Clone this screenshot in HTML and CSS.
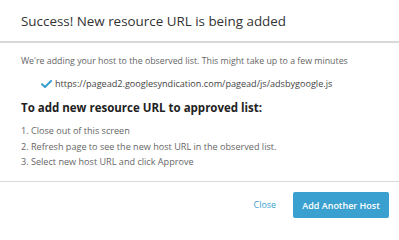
FILE: index.html
```html
<!DOCTYPE html>
<html>
<head>
<meta charset="utf-8">
<link rel="stylesheet" href="styles.css">
</head>
<body>
<div class="modal">
  <div class="modal-header">
    <h1 class="title">Success! New resource URL is being added</h1>
  </div>
  <div class="modal-body">
    <p class="intro">We're adding your host to the observed list. This might take up to a few minutes</p>
    <div class="url-row">
      <svg class="check" width="11" height="8" viewBox="0 0 11 8"><path d="M1 4.2 L4 7 L10 1" fill="none" stroke="#3a9fd0" stroke-width="2" stroke-linecap="round" stroke-linejoin="round"/></svg>
      <span class="url">https://pagead2.googlesyndication.com/pagead/js/adsbygoogle.js</span>
    </div>
    <h2 class="subtitle">To add new resource URL to approved list:</h2>
    <ol class="steps">
      <li>1. Close out of this screen</li>
      <li>2. Refresh page to see the new host URL in the observed list.</li>
      <li>3. Select new host URL and click Approve</li>
    </ol>
  </div>
  <div class="modal-footer">
    <a class="btn-link">Close</a>
    <button class="btn-primary">Add Another Host</button>
  </div>
</div>
</body>
</html>
```
FILE: styles.css
```css
* { box-sizing: border-box; }
html, body { margin: 0; padding: 0; background: #fff; }
body { font-family: "Open Sans", "Liberation Sans", sans-serif; color: #555; }
.modal { width: 399px; height: 228px; background: #fff; display: flex; flex-direction: column; }
.modal-header { height: 43px; flex: none; border-bottom: 2px solid #d9d9d9; display: flex; align-items: center; padding: 0 21px; }
.title { margin: 0; font-size: 13.4px; line-height: 18px; font-weight: 400; color: #333; }
.modal-body { padding: 11px 21px 0; height: 139px; flex: none; border-bottom: 1px solid #d9d9d9; }
.intro { margin: 0; font-size: 8.8px; line-height: 14px; color: #666; white-space: nowrap; }
.url-row { display: flex; align-items: center; padding-left: 20px; margin-top: 9px; height: 14px; }
.check { margin-right: 3px; flex: none; }
.url { font-size: 9.1px; color: #444; line-height: 14px; white-space: nowrap; }
.subtitle { margin: 8px 0 0; font-size: 11.5px; font-weight: 700; color: #222; line-height: 18px; white-space: nowrap; }
.steps { list-style: none; margin: 6px 0 0; padding: 0; }
.steps li { font-size: 9.1px; line-height: 15.5px; color: #666; white-space: nowrap; }
.modal-footer { display: flex; justify-content: flex-end; align-items: flex-start; padding: 10px 10px 0; gap: 17px; flex: none; height: 46px; }
.btn-link { color: #3a9fd0; font-size: 8.9px; line-height: 26px; cursor: pointer; }
.btn-primary { background: #3aa0d0; color: #fff; border: none; border-radius: 2px; width: 96px; height: 26px; font-family: "Open Sans", "Liberation Sans", sans-serif; font-size: 9px; font-weight: 600; padding: 0; }
```
